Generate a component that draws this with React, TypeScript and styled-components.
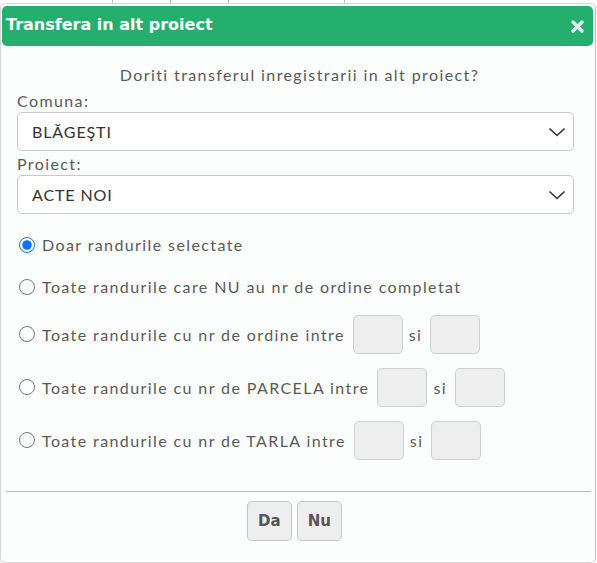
import styled, { createGlobalStyle } from "styled-components";

const GlobalStyle = createGlobalStyle`
  html, body {
    margin: 0;
    padding: 0;
    background: #ffffff;
  }
  body {
    font-family: Lato, "Liberation Sans", sans-serif;
    overflow: hidden;
  }
`;

const Page = styled.div`
  width: 597px;
  height: 563px;
  display: flex;
  flex-direction: column;
  overflow: hidden;
`;

const BackStrip = styled.div`
  height: 3px;
  display: flex;
  overflow: hidden;
  background: #fff;
`;

const BackCell = styled.div<{ $w: number }>`
  width: ${(p) => p.$w}px;
  border-right: 1px solid #b8b8b8;
  flex-shrink: 0;
`;

const Dialog = styled.div`
  width: 596px;
  box-sizing: border-box;
  border: 1px solid #d6d6d6;
  border-right-color: #c4c4c4;
  border-radius: 5px;
  background: #fcfdfd;
  padding: 2px 2px 0 1px;
  flex: 1;
  display: flex;
  flex-direction: column;
`;

const TitleBar = styled.div`
  height: 40px;
  background: #25af6f;
  border-radius: 5px;
  display: flex;
  align-items: center;
  justify-content: space-between;
  padding: 0 9px 0 4px;
`;

const Title = styled.span`
  font-family: "DejaVu Sans", Verdana, sans-serif;
  font-weight: bold;
  font-size: 16px;
  color: #ffffff;
  margin-top: -3px;
`;

const CloseButton = styled.button`
  border: none;
  background: transparent;
  padding: 0;
  width: 14px;
  height: 14px;
  display: flex;
  align-items: center;
  justify-content: center;
  cursor: pointer;
`;

const Body = styled.div`
  padding: 18px 19px 0 15px;
  color: #5a5a5a;
  font-size: 16px;
  letter-spacing: 1.4px;
`;

const Question = styled.div`
  text-align: center;
  line-height: 22px;
  padding-left: 8px;
  margin-bottom: 4px;
`;

const Label = styled.div`
  line-height: 22px;
`;

const SelectBox = styled.div`
  height: 39px;
  box-sizing: border-box;
  border: 1px solid #c8c8c8;
  border-radius: 5px;
  background: #fff;
  display: flex;
  align-items: center;
  justify-content: space-between;
  padding: 0 6px 0 14px;
  color: #333;
  font-size: 16px;
  letter-spacing: 0.9px;

  & + ${Label} {
    margin-top: 2px;
  }
`;

const Options = styled.div`
  margin-top: 17px;
  display: flex;
  flex-direction: column;
  gap: 14px;
`;

const OptionRow = styled.label`
  display: flex;
  align-items: center;
  min-height: 28px;
  padding-left: 2px;
  line-height: 22px;
`;

const Radio = styled.input.attrs({ type: "radio", name: "rows" })`
  width: 16px;
  height: 16px;
  margin: 0 7px 1px 0;
  accent-color: #0b74f5;
`;

const RangeInput = styled.input.attrs({ type: "text" })`
  width: 50px;
  height: 39px;
  box-sizing: border-box;
  border: 1px solid #cfcfcf;
  border-radius: 5px;
  background: #eeeeee;
  margin: 0 6px 0 8px;
`;

const ButtonPane = styled.div`
  margin: 31px 2px 0 4px;
  border-top: 1px solid #bdbdbd;
  padding-top: 9px;
  display: flex;
  justify-content: center;
  gap: 5px;
  padding-right: 8px;
`;

const DialogButton = styled.button`
  height: 40px;
  padding: 0 10px;
  border: 1px solid #c6c6c6;
  border-radius: 5px;
  background: #eeeeee;
  color: #555;
  font-family: "DejaVu Sans", Verdana, sans-serif;
  font-weight: bold;
  font-size: 15px;
`;

function Chevron() {
  return (
    <svg width="20" height="12" viewBox="0 0 20 12">
      <path d="M2.5 2.5 L10 9.5 L17.5 2.5" fill="none" stroke="#333" strokeWidth="1.6" />
    </svg>
  );
}

function CloseIcon() {
  return (
    <svg width="13" height="13" viewBox="0 0 13 13">
      <path
        d="M2 2 L11 11 M11 2 L2 11"
        stroke="#e3e9ef"
        strokeWidth="3.4"
        strokeLinecap="round"
      />
    </svg>
  );
}

const rangeRows = ["ordine", "PARCELA", "TARLA"];

export default function App() {
  return (
    <Page>
      <GlobalStyle />
      <BackStrip>
        <BackCell $w={112} />
        <BackCell $w={57} />
        <BackCell $w={57} />
        <BackCell $w={115} />
      </BackStrip>
      <Dialog>
        <TitleBar>
          <Title>Transfera in alt proiect</Title>
          <CloseButton aria-label="close">
            <CloseIcon />
          </CloseButton>
        </TitleBar>
        <Body>
          <Question>Doriti transferul inregistrarii in alt proiect?</Question>
          <Label>Comuna:</Label>
          <SelectBox>
            <span>BLĂGEŞTI</span>
            <Chevron />
          </SelectBox>
          <Label>Proiect:</Label>
          <SelectBox>
            <span>ACTE NOI</span>
            <Chevron />
          </SelectBox>
          <Options>
            <OptionRow>
              <Radio defaultChecked />
              Doar randurile selectate
            </OptionRow>
            <OptionRow>
              <Radio />
              Toate randurile care NU au nr de ordine completat
            </OptionRow>
            {rangeRows.map((r) => (
              <OptionRow key={r}>
                <Radio />
                Toate randurile cu nr de {r} intre
                <RangeInput />
                si
                <RangeInput />
              </OptionRow>
            ))}
          </Options>
        </Body>
        <ButtonPane>
          <DialogButton>Da</DialogButton>
          <DialogButton>Nu</DialogButton>
        </ButtonPane>
      </Dialog>
    </Page>
  );
}
